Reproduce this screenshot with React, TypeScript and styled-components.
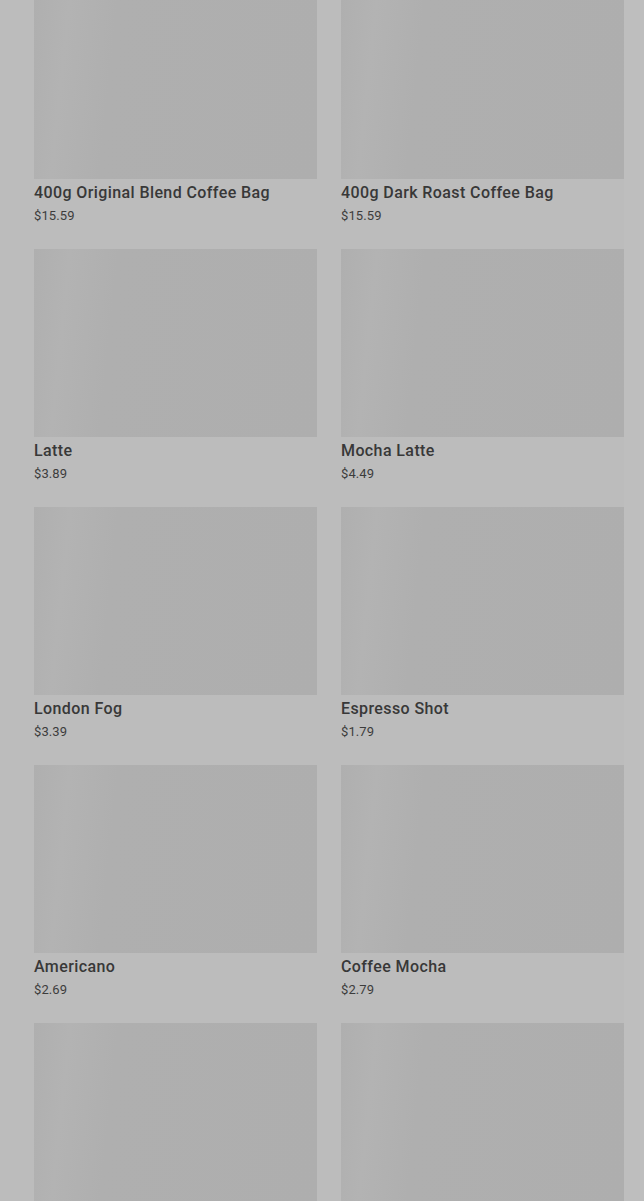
import styled, { createGlobalStyle } from "styled-components";

const GlobalStyle = createGlobalStyle`
  html, body {
    margin: 0;
    padding: 0;
    background-color: #bebebe;
    font-family: Roboto, "Liberation Sans", sans-serif;
  }
`;

const products = [
  { name: "400g Original Blend Coffee Bag", price: "$15.59" },
  { name: "400g Dark Roast Coffee Bag", price: "$15.59" },
  { name: "Latte", price: "$3.89" },
  { name: "Mocha Latte", price: "$4.49" },
  { name: "London Fog", price: "$3.39" },
  { name: "Espresso Shot", price: "$1.79" },
  { name: "Americano", price: "$2.69" },
  { name: "Coffee Mocha", price: "$2.79" },
  { name: "", price: "" },
  { name: "", price: "" },
];

const App = () => {
  return (
    <>
      <GlobalStyle />
      <Page>
        <Grid>
          {products.map((item, i) => (
            <Card key={i}>
              <Thumb />
              <Name>{item.name}</Name>
              <Price>{item.price}</Price>
            </Card>
          ))}
        </Grid>
      </Page>
    </>
  );
};

const Page = styled.div`
  width: 624px;
  height: 1201px;
  overflow: hidden;
  background-color: #bcbcbc;
`;

const Grid = styled.div`
  display: grid;
  grid-template-columns: 283px 283px;
  column-gap: 24px;
  row-gap: 24px;
  margin-top: -9px;
  padding-left: 34px;
`;

const Card = styled.div`
  display: flex;
  flex-direction: column;
`;

const Thumb = styled.div`
  height: 188px;
  background: linear-gradient(
    96deg,
    #afafaf 0%,
    #b3b3b3 12%,
    #afafaf 28%,
    #aeaeae 100%
  );
`;

const Name = styled.p`
  margin: 4px 0 0;
  font-size: 16px;
  line-height: 20px;
  font-weight: 500;
  letter-spacing: 0.4px;
  color: #383838;
  min-height: 20px;
`;

const Price = styled.p`
  margin: 3px 0 0;
  font-size: 13px;
  line-height: 19px;
  letter-spacing: 0.1px;
  color: #3c3c3c;
  min-height: 19px;
`;

export default App;
